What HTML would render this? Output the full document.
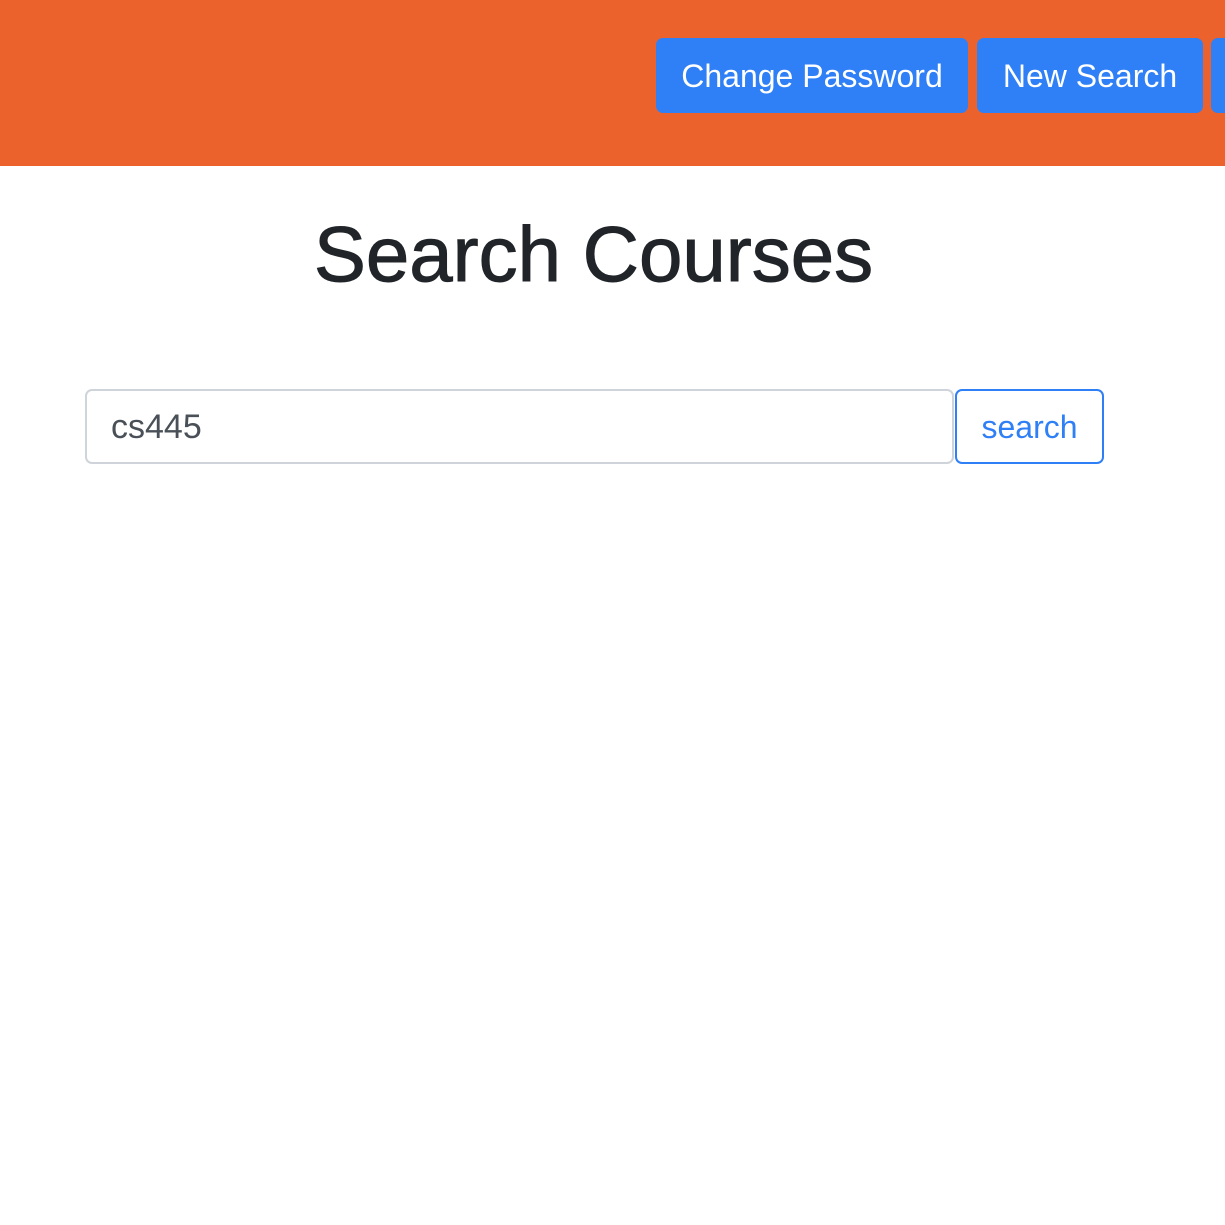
<!DOCTYPE html>
<html><head><meta charset="utf-8"><style>
html,body{margin:0;padding:0;width:1225px;height:1225px;background:#fff;overflow:hidden;font-family:"Liberation Sans",Arial,sans-serif}
.bar{position:absolute;left:0;top:0;width:1225px;height:166px;background:#ec622c}
.btn{position:absolute;top:38px;height:75px;background:#2f7ff6;color:#fff;border-radius:7px;font-size:32px;line-height:77px;text-align:center;box-sizing:border-box}
h1{position:absolute;left:0;width:1187px;top:207px;margin:0;text-align:center;font-size:78px;font-weight:normal;color:#212529;line-height:95px;-webkit-text-stroke:1px #212529}
.inp{position:absolute;left:85px;top:389px;width:869px;height:75px;border:2px solid #ced4da;border-radius:7px;box-sizing:border-box;font-size:34px;line-height:73px;padding-left:24px;color:#495057}
.sb{position:absolute;left:955px;top:389px;width:149px;height:75px;border:2px solid #2f7ff6;border-radius:7px;box-sizing:border-box;font-size:32px;line-height:73px;text-align:center;color:#2f7ff6}
</style></head><body>
<div class="bar"></div>
<div class="btn" style="left:656px;width:312px">Change Password</div>
<div class="btn" style="left:977px;width:226px">New Search</div>
<div class="btn" style="left:1211px;width:60px"></div>
<h1>Search Courses</h1>
<div class="inp">cs445</div>
<div class="sb">search</div>
</body></html>
